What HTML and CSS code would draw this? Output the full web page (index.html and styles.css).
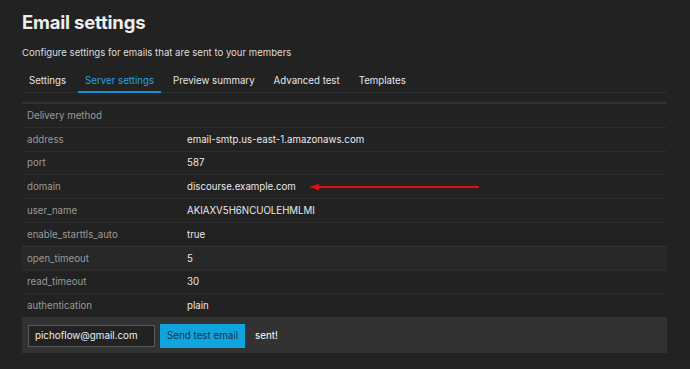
FILE: index.html
```html
<!DOCTYPE html>
<html lang="en">
<head>
    <meta charset="UTF-8">
    <meta name="viewport" content="width=device-width, initial-scale=1.0">
    <title>Email settings</title>
    <link rel="stylesheet" href="styles.css">
</head>
<body>
    <div class="page">
        <h1 class="title">Email settings</h1>
        <p class="subtitle">Configure settings for emails that are sent to your members</p>

        <!-- Tabs -->
        <ul class="tabs">
            <li class="tab">Settings</li>
            <li class="tab active">Server settings</li>
            <li class="tab">Preview summary</li>
            <li class="tab">Advanced test</li>
            <li class="tab">Templates</li>
        </ul>

        <!-- Server settings table -->
        <table class="settings">
            <tr class="head"><td colspan="2">Delivery method</td></tr>
            <tr><td class="key">address</td><td class="val">email-smtp.us-east-1.amazonaws.com</td></tr>
            <tr><td class="key">port</td><td class="val">587</td></tr>
            <tr>
                <td class="key">domain</td>
                <td class="val marked">discourse.example.com
                    <svg class="arrow" width="170" height="8" viewBox="0 0 170 8">
                        <line x1="6" y1="4" x2="170" y2="4" stroke="#e00f0f" stroke-width="2"/>
                        <polygon points="0,4 10,0.8 10,7.2" fill="#e00f0f"/>
                    </svg>
                </td>
            </tr>
            <tr><td class="key">user_name</td><td class="val">AKIAXV5H6NCUOLEHMLMI</td></tr>
            <tr class="strong"><td class="key">enable_starttls_auto</td><td class="val">true</td></tr>
            <tr class="hover"><td class="key">open_timeout</td><td class="val">5</td></tr>
            <tr><td class="key">read_timeout</td><td class="val">30</td></tr>
            <tr class="strong"><td class="key">authentication</td><td class="val">plain</td></tr>
        </table>

        <!-- Send test email -->
        <div class="test-box">
            <input type="text" class="test-input" value="pichoflow@gmail.com">
            <button class="test-button">Send test email</button>
            <span class="test-result">sent!</span>
        </div>
    </div>
</body>
</html>
```

FILE: styles.css
```css
body {
    margin: 0;
    background-color: #222222;
    color: #dddddd;
    font-family: Inter, "Noto Sans", sans-serif;
}

.page {
    width: 645px;
    padding: 10px 0 0 22px;
}

.title {
    margin: 0;
    font-size: 18.5px;
    font-weight: 700;
    letter-spacing: -0.2px;
    line-height: 24px;
    color: #eeeeee;
}

.subtitle {
    margin: 12px 0 0;
    font-size: 9.6px;
    line-height: 14px;
    color: #dddddd;
}

.tabs {
    display: flex;
    list-style: none;
    margin: 10px 0 0;
    padding: 0;
    border-bottom: 1px solid #2e2e2e;
}

.tab {
    margin-right: 5px;
    padding: 4px 7px 3px;
    font-size: 9.7px;
    line-height: 14px;
    color: #e6e6e6;
    border-bottom: 2px solid transparent;
    margin-bottom: -1px;
}

.tab.active {
    color: #2da1e0;
    border-bottom-color: #1a8fd6;
}

.settings {
    width: 100%;
    margin-top: 9px;
    border-collapse: collapse;
    border-top: 2px solid #333333;
    font-size: 9.7px;
}

.settings td {
    height: 22.8px;
    padding: 0 5px;
    border-bottom: 1px solid #2c2c2c;
}

.settings .head td {
    color: #999999;
}

.key {
    width: 150px;
    color: #999999;
}

.val {
    color: #e8e8e8;
}

.settings tr.strong td {
    border-bottom-color: #333333;
}

.settings tr.hover td {
    background-color: #282828;
}

.marked {
    position: relative;
}

.arrow {
    position: absolute;
    left: 127px;
    top: 8px;
}

.test-box {
    display: flex;
    align-items: center;
    height: 35px;
    padding: 0 6px;
    background-color: #323232;
}

.test-input {
    width: 113px;
    height: 20px;
    padding: 0 6px;
    background-color: #222222;
    border: 1px solid #5a5a5a;
    color: #eeeeee;
    font-family: Inter, "Noto Sans", sans-serif;
    font-size: 9.8px;
}

.test-button {
    margin-left: 5px;
    height: 24px;
    padding: 0 7px;
    background-color: #10a3dd;
    border: none;
    color: #1c3444;
    font-family: Inter, "Noto Sans", sans-serif;
    font-size: 9.8px;
    cursor: pointer;
}

.test-result {
    margin-left: 10px;
    font-size: 9.8px;
    color: #ffffff;
}
```
